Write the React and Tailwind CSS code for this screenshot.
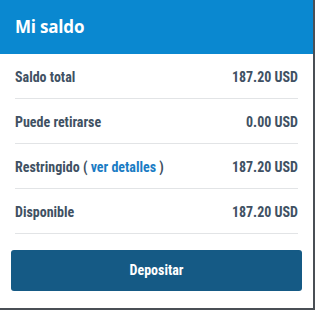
const rows = [
  { label: 'Saldo total', value: '187.20 USD' },
  { label: 'Puede retirarse', value: '0.00 USD' },
  { label: 'Restringido', value: '187.20 USD', link: true },
  { label: 'Disponible', value: '187.20 USD' },
];

const App = () => {
  return (
    <div className="w-[315px] h-[310px] bg-[#4a4f55]">
      <div className="w-[313px] h-[308px] bg-white flex flex-col">
        <div className="h-[54px] bg-[#0a88d0] flex items-center px-[15px]">
          <h2 className="text-white text-[17px] font-bold font-['Open_Sans',sans-serif] tracking-[-0.2px]">
            Mi saldo
          </h2>
        </div>
        <div className="px-[15px] font-['Roboto_Condensed','DejaVu_Sans_Condensed',sans-serif] font-bold text-[14px] text-[#3f5163] whitespace-nowrap">
          {rows.map((row) => (
            <div
              key={row.label}
              className="h-[45px] pt-[3px] flex items-center justify-between border-b border-[#e2e4e6]"
            >
              <span>
                {row.label}
                {row.link && (
                  <>
                    {' '}( <a className="text-[#1a7cc4]">ver detalles</a> )
                  </>
                )}
              </span>
              <span>{row.value}</span>
            </div>
          ))}
        </div>
        <div className="px-[11px] pt-[16px]">
          <button className="w-full h-[41px] rounded-[3px] bg-[#155a85] text-white font-bold text-[14px] font-['Roboto_Condensed','DejaVu_Sans_Condensed',sans-serif]">
            Depositar
          </button>
        </div>
      </div>
    </div>
  );
};

export default App;
